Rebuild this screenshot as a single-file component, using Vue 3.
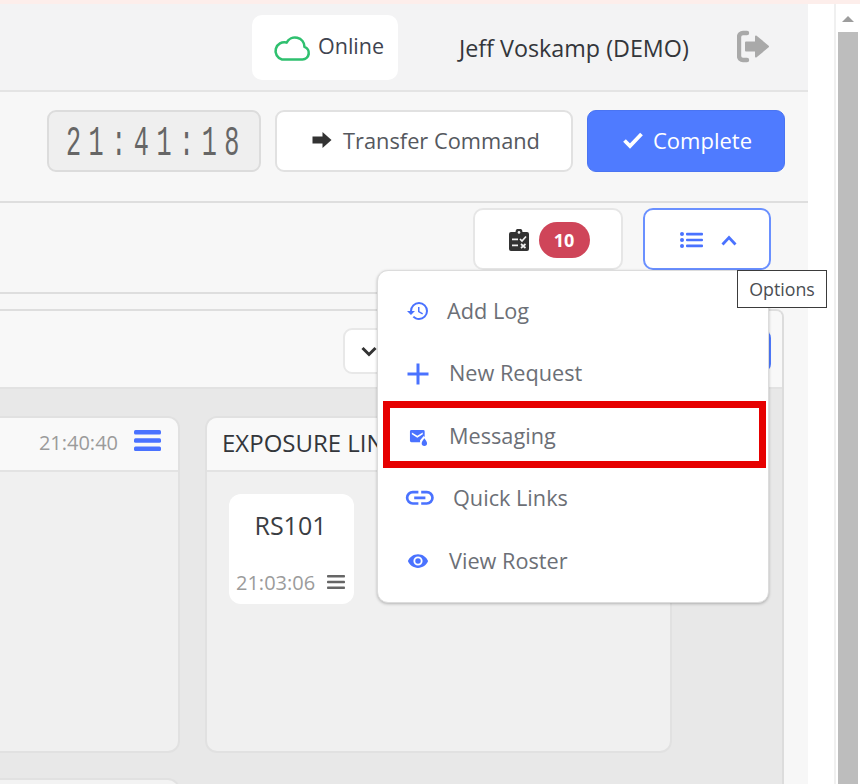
<script setup>
const items = [
  { key: 'log', label: 'Add Log' },
  { key: 'plus', label: 'New Request' },
  { key: 'mail', label: 'Messaging' },
  { key: 'link', label: 'Quick Links' },
  { key: 'eye', label: 'View Roster' }
]
const paths = {
  log: 'M13.5,8H12V13L16.28,15.54L17,14.33L13.5,12.25V8M13,3A9,9 0 0,0 4,12H1L4.96,16.03L9,12H6A7,7 0 0,1 13,5A7,7 0 0,1 20,12A7,7 0 0,1 13,19C11.07,19 9.32,18.21 8.06,16.94L6.64,18.36C8.27,20 10.5,21 13,21A9,9 0 0,0 22,12A9,9 0 0,0 13,3',
  plus: 'M19,13H13V19H11V13H5V11H11V5H13V11H19V13Z',
  mail: 'M3 2.5H18A1.8 1.8 0 0 1 19.8 4.3V11.5L18.6 10 14 15.5V18H3A1.8 1.8 0 0 1 1.2 16.2V4.3A1.8 1.8 0 0 1 3 2.5ZM3.6 5.6V8L10.5 12.2 17.4 8V5.6L10.5 9.8ZM19.4 13C20.8 15.2 22.8 17 22.8 19.2A3.4 3.4 0 0 1 16 19.2C16 17 18 15.2 19.4 13Z',
  link: 'M3.9,12C3.9,10.29 5.29,8.9 7,8.9H11V7H7A5,5 0 0,0 2,12A5,5 0 0,0 7,17H11V15.1H7C5.29,15.1 3.9,13.71 3.9,12M8,13H16V11H8V13M17,7H13V8.9H17C18.71,8.9 20.1,10.29 20.1,12C20.1,13.71 18.71,15.1 17,15.1H13V17H17A5,5 0 0,0 22,12A5,5 0 0,0 17,7Z',
  eye: 'M12,9A3,3 0 0,0 9,12A3,3 0 0,0 12,15A3,3 0 0,0 15,12A3,3 0 0,0 12,9M12,17A5,5 0 0,1 7,12A5,5 0 0,1 12,7A5,5 0 0,1 17,12A5,5 0 0,1 12,17M12,4.5C7,4.5 2.73,7.61 1,12C2.73,16.39 7,19.5 12,19.5C17,19.5 21.27,16.39 23,12C21.27,7.61 17,4.5 12,4.5Z'
}
</script>

<template>
  <div class="page">
    <div class="topline"></div>
    <div class="content">
      <main class="main">
        <header class="header">
          <div class="online">
            <svg class="cloud" viewBox="0 0 38 26" fill="none">
              <path d="M9 24.5H29.5A6.5 6.5 0 0 0 31.5 11.9A9.5 9.5 0 0 0 13.6 7.6A8.7 8.7 0 0 0 9 24.5Z" stroke="#2fc06f" stroke-width="2.6" stroke-linejoin="round" />
            </svg>
            <span>Online</span>
          </div>
          <div class="user">Jeff Voskamp (DEMO)</div>
          <svg class="logout" viewBox="0 0 32 33">
            <path d="M10 3H6A4 4 0 0 0 2 7V26A4 4 0 0 0 6 30H10" fill="none" stroke="#a9a9a9" stroke-width="4.4" stroke-linecap="round" />
            <path d="M19 6.5 31 16.5 19 26.5V20.5H9V12.5H19Z" fill="#a9a9a9" stroke="#a9a9a9" stroke-width="2" stroke-linejoin="round" />
          </svg>
        </header>

        <section class="bar-actions">
          <div class="clock"><span class="clock-text">21:41:18</span></div>
          <button class="btn btn-transfer">
            <svg class="arrow" viewBox="0 0 20 18"><path d="M10.5 1 19.5 9 10.5 17V12.5H.5V5.5H10.5Z" fill="#333" /></svg>
            Transfer Command
          </button>
          <button class="btn btn-complete">
            <svg class="check" viewBox="0 0 22 18"><path d="M2.5 9.5 8 15 19.5 3" fill="none" stroke="#fff" stroke-width="3.8" /></svg>
            Complete
          </button>
        </section>

        <section class="bar-tools">
          <button class="tool tool-tasks">
            <svg class="clip" viewBox="0 0 20 22">
              <path d="M2 3H6.5A3.5 3.5 0 0 1 13.5 3H18A2 2 0 0 1 20 5V20A2 2 0 0 1 18 22H2A2 2 0 0 1 0 20V5A2 2 0 0 1 2 3Z" fill="#333" />
              <circle cx="10" cy="3.4" r="1.3" fill="#f2f2f2" />
              <path d="M3 9.5H9V11.3H3ZM3 15.5H9V17.3H3Z" fill="#f2f2f2" />
              <path d="M11 10 13 12 17 7.5M12 15 16.5 19M16.5 15 12 19" fill="none" stroke="#f2f2f2" stroke-width="1.7" />
            </svg>
            <span class="badge">10</span>
          </button>
          <button class="tool tool-options">
            <svg class="list" viewBox="0 0 23 16">
              <circle cx="2" cy="2" r="2" /><circle cx="2" cy="8" r="2" /><circle cx="2" cy="14" r="2" />
              <rect x="6" y=".8" width="17" height="2.6" rx="1" /><rect x="6" y="6.7" width="17" height="2.6" rx="1" /><rect x="6" y="12.6" width="17" height="2.6" rx="1" />
            </svg>
            <svg class="chev-up" viewBox="0 0 16 11"><path d="M1.5 9.5 8 2.5 14.5 9.5" fill="none" stroke="#4a72ff" stroke-width="2.8" /></svg>
          </button>
        </section>

        <section class="panel-wrap">
          <div class="panel">
            <div class="panel-head">
              <button class="mini-btn">
                <svg class="chev-down" viewBox="0 0 16 11"><path d="M1.5 2 8 8.5 14.5 2" fill="none" stroke="#333" stroke-width="3" /></svg>
              </button>
              <button class="mini-blue"></button>
            </div>
            <div class="panel-body">
              <div class="card">
                <div class="card-head card-head-end">
                  <span class="time">21:40:40</span>
                  <svg class="menu-blue" viewBox="0 0 27 21"><rect width="27" height="4.6" rx="1.5" /><rect y="8.2" width="27" height="4.6" rx="1.5" /><rect y="16.4" width="27" height="4.6" rx="1.5" /></svg>
                </div>
                <div class="card-body"></div>
              </div>
              <div class="card">
                <div class="card-head"><span class="title">EXPOSURE LINE</span></div>
                <div class="card-body">
                  <div class="tile">
                    <div class="tile-name">RS101</div>
                    <div class="tile-foot">
                      <span class="time">21:03:06</span>
                      <svg class="menu-grey" viewBox="0 0 18 14"><rect width="18" height="2.6" rx=".8" /><rect y="5.7" width="18" height="2.6" rx=".8" /><rect y="11.4" width="18" height="2.6" rx=".8" /></svg>
                    </div>
                  </div>
                </div>
              </div>
              <div class="card card-next"></div>
            </div>
          </div>
        </section>
      </main>
      <div class="gutter"></div>
      <aside class="scrollbar">
        <div class="scroll-arrow"></div>
        <div class="scroll-thumb"></div>
      </aside>
    </div>

    <div class="menu">
      <div v-for="item in items" :key="item.key" class="menu-item" :class="'item-' + item.key">
        <svg class="menu-icon" viewBox="0 0 24 24"><path :d="paths[item.key]" fill-rule="evenodd" /></svg>
        <span>{{ item.label }}</span>
      </div>
    </div>
    <div class="tooltip">Options</div>
    <div class="highlight"></div>
  </div>
</template>

<style>
html, body { margin: 0; background: #fff; }
</style>

<style scoped>
.page {
  position: relative;
  width: 860px;
  height: 784px;
  overflow: hidden;
  background: #fff;
  font-family: "Open Sans", "Noto Sans", sans-serif;
  color: #3a3d42;
}
.topline { height: 4px; background: #fdeeeb; }
.content { display: flex; height: 780px; }
.main { width: 808px; flex: none; display: flex; flex-direction: column; background: #f7f7f7; }

.header {
  height: 88px;
  flex: none;
  box-sizing: border-box;
  background: #f3f3f4;
  border-bottom: 2px solid #e4e4e4;
  display: flex;
  align-items: flex-start;
  padding: 11px 39px 0 252px;
}
.online {
  width: 146px;
  height: 65px;
  flex: none;
  box-sizing: border-box;
  background: #fff;
  border-radius: 10px;
  display: flex;
  align-items: center;
  padding: 0 0 4px 21px;
  gap: 7px;
  font-size: 21.5px;
  color: #3f4450;
}
.cloud { width: 38px; height: 26px; margin-top: 5px; }
.user { margin: 14px 0 0 61px; font-size: 23.3px; line-height: 38px; color: #33363b; white-space: nowrap; }
.logout { width: 32px; height: 33px; margin: 15px 0 0 auto; }

.bar-actions {
  height: 111px;
  flex: none;
  box-sizing: border-box;
  border-bottom: 2px solid #dedede;
  display: flex;
  padding: 18px 0 0 47px;
}
.clock {
  width: 214px;
  height: 62px;
  box-sizing: border-box;
  background: #efefef;
  border: 2px solid #dcdcdc;
  border-radius: 9px;
  overflow: hidden;
  display: flex;
  align-items: center;
  padding-top: 5px;
}
.clock-text {
  font-family: "Liberation Mono", monospace;
  font-size: 42px;
  letter-spacing: 12.5px;
  color: #666;
  white-space: nowrap;
  transform: scaleX(0.6);
  transform-origin: left center;
  margin-left: 17px;
}
.btn {
  height: 62px;
  box-sizing: border-box;
  border-radius: 9px;
  font-family: inherit;
  font-size: 21.8px;
  display: flex;
  align-items: center;
  justify-content: center;
}
.btn-transfer { width: 298px; margin-left: 14px; padding: 0 0 2px 4px; background: #fff; border: 2px solid #e1e1e1; color: #55585e; gap: 11px; }
.btn-complete { width: 198px; margin-left: 14px; padding: 0 0 2px 2px; background: #4f7bff; border: 1px solid #4a74f2; color: #fff; gap: 9px; font-size: 22px; }
.arrow { width: 20px; height: 18px; }
.check { width: 22px; height: 18px; }

.bar-tools {
  height: 91px;
  flex: none;
  box-sizing: border-box;
  border-bottom: 2px solid #dedede;
  display: flex;
  padding: 5px 0 0 473px;
}
.tool {
  height: 62px;
  box-sizing: border-box;
  background: #fff;
  border-radius: 10px;
  display: flex;
  align-items: center;
  justify-content: center;
  padding: 2px 0 0 2px;
}
.tool-tasks { width: 150px; border: 2px solid #e6e6e6; gap: 10px; }
.tool-options { width: 128px; margin-left: 20px; border: 2px solid #6a90ff; gap: 18px; }
.clip { width: 20px; height: 22px; }
.badge {
  width: 51px;
  height: 36px;
  border-radius: 18px;
  background: #cf4559;
  color: #fff;
  font-family: "Open Sans", sans-serif;
  font-weight: 700;
  font-size: 18px;
  line-height: 36px;
  text-align: center;
}
.list { width: 23px; height: 16px; fill: #4a72ff; }
.chev-up { width: 16px; height: 11px; }

.panel-wrap { flex: 1; min-height: 0; padding: 15px 24px 0 0; }
.panel {
  height: 100%;
  box-sizing: border-box;
  border-top: 2px solid #dedede;
  border-right: 2px solid #dcdcdc;
  border-radius: 0 8px 0 0;
  overflow: hidden;
  display: flex;
  flex-direction: column;
}
.panel-head {
  height: 78px;
  flex: none;
  box-sizing: border-box;
  background: #f8f8f8;
  border-bottom: 2px solid #e2e2e2;
  display: flex;
  align-items: flex-start;
  justify-content: flex-end;
  padding: 17px 11px 0 0;
}
.mini-btn {
  width: 118px;
  height: 46px;
  box-sizing: border-box;
  background: #fff;
  border: 2px solid #e8e8e8;
  border-radius: 9px;
  padding: 0 0 0 16px;
  text-align: left;
}
.chev-down { width: 16px; height: 11px; display: block; }
.mini-blue {
  width: 170px;
  height: 42px;
  margin: 2px 0 0 140px;
  background: #4f7bff;
  border: none;
  border-radius: 8px;
  padding: 0;
}
.panel-body {
  flex: 1;
  min-height: 0;
  background: #e8e8e8;
  padding-top: 27px;
  display: grid;
  grid-template-columns: 200px 467px;
  grid-template-rows: 337px 100px;
  gap: 25px;
  margin-left: -20px;
}
.card {
  box-sizing: border-box;
  background: #f0f0f0;
  border: 2px solid #e1e1e1;
  border-radius: 12px;
  overflow: hidden;
  display: flex;
  flex-direction: column;
}
.card-head {
  height: 54px;
  flex: none;
  box-sizing: border-box;
  background: #f9f9f9;
  border-bottom: 2px solid #e3e3e3;
  display: flex;
  align-items: center;
  padding: 0 15px 4px;
}
.card-head-end { justify-content: flex-end; padding: 0 17px 4px 0; }
.title { font-size: 24px; color: #33363b; white-space: nowrap; }
.time { font-size: 20px; color: #9b9b9b; white-space: nowrap; }
.menu-blue { width: 27px; height: 21px; fill: #4a72ff; margin: 0 0 4px 16px; }
.card-body { flex: 1; padding: 22px 22px; }
.tile {
  width: 125px;
  height: 110px;
  box-sizing: border-box;
  background: #fff;
  border-radius: 12px;
  padding: 12px 9px 0 7px;
  display: flex;
  flex-direction: column;
  justify-content: space-between;
}
.tile-name { font-size: 25px; line-height: 38px; text-align: center; color: #3a3d42; }
.tile-foot { display: flex; align-items: center; justify-content: space-between; height: 28px; margin-bottom: 8px; }
.menu-grey { width: 18px; height: 14px; fill: #666; }
.card-next { background: #f3f3f3; }

.gutter { width: 28px; flex: none; background: #fff; border-right: 2px solid #f0f0f0; box-sizing: border-box; margin-right: 2px; }
.scrollbar { width: 20px; flex: none; padding-top: 12px; box-sizing: border-box; }
.scroll-arrow {
  width: 0; height: 0; margin: 0 auto 10px;
  border-left: 6px solid transparent;
  border-right: 6px solid transparent;
  border-bottom: 6px solid #9d9d9d;
}
.scroll-thumb { height: 800px; background: #bdbdbd; }

.menu {
  position: absolute;
  left: 377px;
  top: 270px;
  width: 392px;
  height: 333px;
  box-sizing: border-box;
  background: #fff;
  border: 1px solid #dcdcdc;
  border-radius: 11px;
  box-shadow: 0 1px 3px rgba(0, 0, 0, 0.25);
  padding: 8px 0 0 28px;
}
.menu-item {
  height: 62.5px;
  display: flex;
  align-items: center;
  font-size: 21.7px;
  color: #6c6f76;
  white-space: nowrap;
}
.menu-icon { fill: #4a72ff; flex: none; }
.item-log .menu-icon { width: 24px; height: 24px; margin: 2px 17px 0 0; }
.item-plus .menu-icon { width: 36px; height: 36px; margin: 2px 13.5px 0 -6.5px; }
.item-mail .menu-icon { width: 19px; height: 19px; margin: 4px 21.2px 0 2.8px; }
.item-link .menu-icon { width: 33.6px; height: 33.6px; margin: 0 16.2px 0 -2.8px; }
.item-eye .menu-icon { width: 22px; height: 22px; margin: 2px 20px 0 1px; }

.tooltip {
  position: absolute;
  left: 737px;
  top: 270px;
  width: 90px;
  height: 38px;
  box-sizing: border-box;
  background: #fff;
  border: 1px solid #3b3b3b;
  font-size: 17.8px;
  line-height: 36px;
  text-align: center;
  color: #4a4d52;
}
.highlight {
  position: absolute;
  left: 383px;
  top: 401px;
  width: 383px;
  height: 67px;
  box-sizing: border-box;
  border: 7px solid #e60000;
}
</style>
